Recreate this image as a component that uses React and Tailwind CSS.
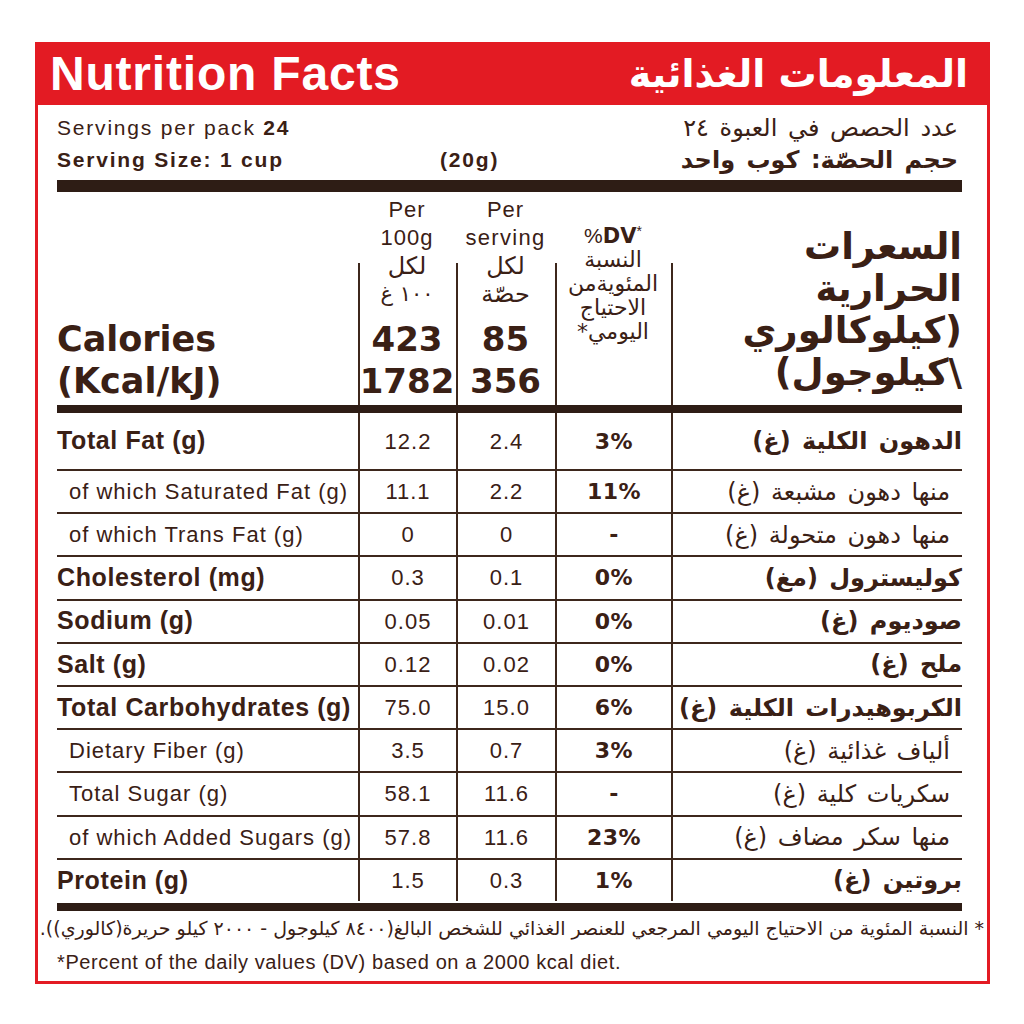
const ink = 'text-[#3a2015]'
const ar = "font-['DejaVu_Sans',sans-serif]"
const en = "font-['Liberation_Sans',Arial,sans-serif]"
const heavy = "font-['DejaVu_Sans',sans-serif] font-bold"

const rows = [
  { en: 'Total Fat (g)', ar: 'الدهون الكلية (غ)', a: '12.2', b: '2.4', dv: '3%', bold: true, first: true },
  { en: 'of which Saturated Fat (g)', ar: 'منها دهون مشبعة (غ)', a: '11.1', b: '2.2', dv: '11%' },
  { en: 'of which Trans Fat (g)', ar: 'منها دهون متحولة (غ)', a: '0', b: '0', dv: '-' },
  { en: 'Cholesterol (mg)', ar: 'كوليسترول (مغ)', a: '0.3', b: '0.1', dv: '0%', bold: true },
  { en: 'Sodium (g)', ar: 'صوديوم (غ)', a: '0.05', b: '0.01', dv: '0%', bold: true },
  { en: 'Salt (g)', ar: 'ملح (غ)', a: '0.12', b: '0.02', dv: '0%', bold: true },
  { en: 'Total Carbohydrates (g)', ar: 'الكربوهيدرات الكلية (غ)', a: '75.0', b: '15.0', dv: '6%', bold: true },
  { en: 'Dietary Fiber (g)', ar: 'ألياف غذائية (غ)', a: '3.5', b: '0.7', dv: '3%' },
  { en: 'Total Sugar (g)', ar: 'سكريات كلية (غ)', a: '58.1', b: '11.6', dv: '-' },
  { en: 'of which Added Sugars (g)', ar: 'منها سكر مضاف (غ)', a: '57.8', b: '11.6', dv: '23%' },
  { en: 'Protein (g)', ar: 'بروتين (غ)', a: '1.5', b: '0.3', dv: '1%', bold: true },
]

const VLine = () => (
  <span className="absolute left-0 top-[71px] bottom-0 w-[2px] bg-[#3d271c]" />
)

const NutritionRow = ({ row }) => (
  <div
    className={`grid grid-cols-[301px_98px_99px_116px_1fr] ${row.first ? 'h-[56px]' : 'h-[43.2px] border-t-[2px] border-[#3d271c]'}`}
  >
    <div
      className={`flex items-center ${en} ${row.bold ? 'font-bold text-[25px] tracking-[0.6px]' : 'pl-[12px] text-[22px] tracking-[1px]'}`}
    >
      {row.en}
    </div>
    <div className={`flex items-center justify-center border-l-[2px] border-[#3d271c] ${en} text-[22px] tracking-[1px]`}>
      {row.a}
    </div>
    <div className={`flex items-center justify-center border-l-[2px] border-[#3d271c] ${en} text-[22px] tracking-[1px]`}>
      {row.b}
    </div>
    <div className={`flex items-center justify-center border-l-[2px] border-[#3d271c] ${heavy} text-[22px] tracking-[0.5px]`}>
      {row.dv}
    </div>
    <div
      dir="rtl"
      className={`flex items-center whitespace-nowrap border-l-[2px] border-[#3d271c] ${ar} text-[24px] [word-spacing:3px] ${row.bold ? 'font-bold' : 'pr-[12px]'}`}
    >
      {row.ar}
    </div>
  </div>
)

export default function App() {
  return (
    <div className={`w-[1024px] h-[1024px] bg-white pt-[42px] pl-[35px] ${ink}`}>
      <div className="w-[955px] border-x-[3px] border-b-[3px] border-[#e31b23] bg-white">
        {/* red title bar */}
        <div className="h-[63px] bg-[#e31b23] flex items-center justify-between pl-[12px] pr-[19px] text-white">
          <span className={`${en} font-bold text-[48px] leading-none tracking-[0.8px]`}>Nutrition Facts</span>
          <span dir="rtl" className={`${ar} font-bold text-[38px] leading-none`}>المعلومات الغذائية</span>
        </div>

        <div className="pl-[19px] pr-[25px]">
          {/* servings */}
          <div className="pt-[7px]">
            <div className="h-[32px] flex items-center justify-between">
              <span className={`${en} text-[21px] tracking-[1.8px]`}>
                Servings per pack <b>24</b>
              </span>
              <span dir="rtl" className={`${ar} text-[24px] [word-spacing:3px] pr-[4px]`}>عدد الحصص في العبوة ٢٤</span>
            </div>
            <div className="h-[32px] flex items-center justify-between">
              <span className={`${en} text-[21px] tracking-[1.8px] font-bold flex`}>
                <span className="w-[383px]">Serving Size: 1 cup</span>
                <span>(20g)</span>
              </span>
              <span dir="rtl" className={`${ar} text-[24px] font-bold [word-spacing:3px] pr-[4px]`}>حجم الحصّة: كوب واحد</span>
            </div>
          </div>
          <div className="h-[12px] bg-[#2e1d15] mt-[4px]" />

          {/* calories header */}
          <div className="grid grid-cols-[301px_98px_99px_116px_1fr] h-[213px]">
            <div className={`flex flex-col justify-end pb-[3px] ${heavy} text-[35px] leading-[42px]`}>
              <span>Calories</span>
              <span>(Kcal/kJ)</span>
            </div>
            <div className="relative flex flex-col items-center pt-[4px] pb-[3px]">
              <VLine />
              <span className={`${en} text-[22px] leading-[28px] tracking-[1px]`}>Per</span>
              <span className={`${en} text-[22px] leading-[28px] tracking-[1px]`}>100g</span>
              <span dir="rtl" className={`${ar} text-[24px] leading-[28px]`}>لكل</span>
              <span dir="rtl" className={`${ar} text-[21px] leading-[28px]`}>١٠٠ غ</span>
              <span className={`mt-auto ${heavy} text-[34px] leading-[42px]`}>423</span>
              <span className={`${heavy} text-[34px] leading-[42px]`}>1782</span>
            </div>
            <div className="relative flex flex-col items-center pt-[4px] pb-[3px]">
              <VLine />
              <span className={`${en} text-[22px] leading-[28px] tracking-[1px]`}>Per</span>
              <span className={`${en} text-[22px] leading-[28px] tracking-[1.3px]`}>serving</span>
              <span dir="rtl" className={`${ar} text-[24px] leading-[28px]`}>لكل</span>
              <span dir="rtl" className={`${ar} text-[24px] leading-[28px]`}>حصّة</span>
              <span className={`mt-auto ${heavy} text-[34px] leading-[42px]`}>85</span>
              <span className={`${heavy} text-[34px] leading-[42px]`}>356</span>
            </div>
            <div className="relative flex flex-col items-center pt-[32px]">
              <VLine />
              <span className={`${en} text-[21px] leading-[24px]`}>
                %<span className={`${heavy}`}>DV</span>
                <sup className="text-[14px]">*</sup>
              </span>
              <span dir="rtl" className={`${ar} text-[22px] leading-[24px]`}>النسبة</span>
              <span dir="rtl" className={`${ar} text-[22px] leading-[24px] whitespace-nowrap`}>المئويةمن</span>
              <span dir="rtl" className={`${ar} text-[22px] leading-[24px]`}>الاحتياج</span>
              <span dir="rtl" className={`${ar} text-[22px] leading-[24px]`}>اليومي*</span>
            </div>
            <div dir="rtl" className={`relative flex flex-col pt-[34px] ${ar} font-bold text-[37px] leading-[42px]`}>
              <span className="absolute left-0 top-[71px] bottom-0 w-[2px] bg-[#3d271c]" />
              <span>السعرات</span>
              <span>الحرارية</span>
              <span>(كيلوكالوري</span>
              <span>\كيلوجول)</span>
            </div>
          </div>
          <div className="h-[8px] bg-[#2e1d15]" />

          {/* nutrient rows */}
          {rows.map((row) => (
            <NutritionRow key={row.en} row={row} />
          ))}
          <div className="h-[8px] bg-[#2e1d15] mt-[2px]" />

          {/* footnotes */}
          <div
            dir="rtl"
            className={`h-[34px] flex items-center -mr-[22px] -ml-[16px] whitespace-nowrap ${ar} text-[19px]`}
          >
            * النسبة المئوية من الاحتياج اليومي المرجعي  للعنصر الغذائي للشخص البالغ(٨٤٠٠ كيلوجول - ٢٠٠٠ كيلو حريرة(كالوري)).
          </div>
          <div className={`h-[36px] flex items-start pt-[2px] ${en} text-[20px] tracking-[0.6px]`}>
            *Percent of the daily values (DV) based on a 2000 kcal diet.
          </div>
        </div>
      </div>
    </div>
  )
}
